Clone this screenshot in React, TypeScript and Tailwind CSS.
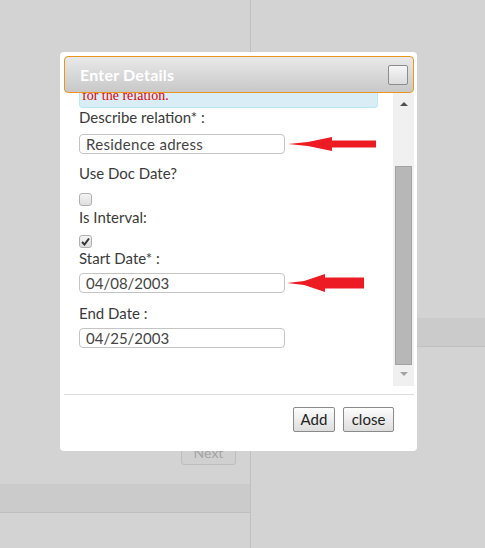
import React from "react";

const font = { fontFamily: "Lato, 'Open Sans', sans-serif" };

const Arrow = ({ w, h, head, shaft }: { w: number; h: number; head: number; shaft: number }) => {
  const m = h / 2;
  return (
    <svg width={w} height={h} viewBox={`0 0 ${w} ${h}`} className="shrink-0">
      <path
        d={`M0 ${m} L${head * 0.45} ${m - 2} L${head} 0 L${head} ${m - shaft / 2} L${w} ${m - shaft / 2} L${w} ${m + shaft / 2} L${head} ${m + shaft / 2} L${head} ${h} L${head * 0.45} ${m + 2} Z`}
        fill="#ed1c24"
      />
    </svg>
  );
};

const Field = ({ value, date }: { value: string; date?: boolean }) => (
  <div
    className={`w-[206px] h-[20px] border border-[#c4c4c4] rounded-[4px] bg-white pl-[6px] text-[15px] leading-[18px] text-[#444] ${
      date ? "tracking-[0px]" : "tracking-[0.3px]"
    }`}
  >
    {value}
  </div>
);

const Check = ({ checked }: { checked?: boolean }) => (
  <div className="w-[13px] h-[13px] border border-[#b0b0b0] rounded-[3px] bg-gradient-to-b from-[#f4f4f4] to-[#dedede] flex items-center justify-center">
    {checked ? (
      <svg width="9" height="9" viewBox="0 0 9 9">
        <path d="M1 5 L3.5 7.5 L8 1.5" stroke="#333" strokeWidth="2" fill="none" />
      </svg>
    ) : null}
  </div>
);

const Label = ({ children, className = "" }: { children: React.ReactNode; className?: string }) => (
  <div className={`h-[18px] leading-[18px] text-[15px] text-[#3a3a3a] ${className}`}>{children}</div>
);

export default function App() {
  return (
    <div className="relative w-[485px] h-[548px] overflow-hidden bg-[#d3d3d3] flex" style={font}>
      {/* page behind overlay */}
      <div className="w-[251px] h-full border-r border-[#c0c0c0] flex flex-col">
        <div className="h-[440px]" />
        <div className="flex justify-end pr-[14px]">
          <div className="w-[55px] h-[25px] border border-[#bdbdbd] rounded-[3px] bg-[#d0d0d0] text-[14px] leading-[23px] text-center text-[#a5a5a5]">
            Next
          </div>
        </div>
        <div className="mt-[19px] h-[29px] bg-[#cbcbcb] border-b border-[#bfbfbf]" />
      </div>
      <div className="flex-1 flex flex-col">
        <div className="h-[318px]" />
        <div className="h-[29px] bg-[#cbcbcb] border-b border-[#c0c0c0]" />
      </div>

      {/* dialog */}
      <div className="absolute left-[60px] top-[52px] w-[357px] h-[399px] bg-white rounded-[4px] pt-[4px] pl-[4px] flex flex-col">
        <div className="w-[350px] h-[37px] shrink-0 border border-[#e8961f] rounded-[4px] bg-gradient-to-b from-[#e9e9e9] to-[#c8c8c8] flex items-center justify-between pl-[15px] pr-[5px]">
          <span className="text-white font-bold text-[16px] tracking-[0.2px]">Enter Details</span>
          <div className="w-[20px] h-[20px] border border-[#8c8c8c] rounded-[2px] bg-gradient-to-b from-[#f6f6f6] to-[#dcdcdc]" />
        </div>

        <div className="w-[350px] h-[293px] flex">
          <div className="flex-1 pl-[15px] flex flex-col overflow-hidden">
            <div className="w-[299px] h-[15px] bg-[#d9edf7] border border-t-0 border-[#bce8f1] rounded-b-[4px] overflow-hidden flex items-end pl-[2px]">
              <span className="text-[14px] leading-[16px] text-[#e00000] relative top-[-3px]" style={{ fontFamily: "'Liberation Serif', serif" }}>
                for the relation.
              </span>
            </div>
            <Label>Describe relation* :</Label>
            <div className="mt-[8px] flex items-center gap-[3px]">
              <Field value="Residence adress" />
              <Arrow w={88} h={14} head={44} shaft={7} />
            </div>
            <Label className="mt-[10px]">Use Doc Date?</Label>
            <div className="mt-[11px]">
              <Check />
            </div>
            <Label className="mt-[2px]">Is Interval:</Label>
            <div className="mt-[9px]">
              <Check checked />
            </div>
            <Label className="mt-[1px]">Start Date* :</Label>
            <div className="mt-[6px] flex items-center gap-[2px]">
              <Field value="04/08/2003" date />
              <Arrow w={77} h={18} head={38} shaft={11} />
            </div>
            <Label className="mt-[11px]">End Date :</Label>
            <div className="mt-[6px]">
              <Field value="04/25/2003" date />
            </div>
          </div>
          {/* scrollbar */}
          <div className="w-[21px] h-full bg-[#f0f0f0] flex flex-col items-center">
            <div className="mt-[9px] w-0 h-0 border-l-[4px] border-r-[4px] border-b-[4px] border-l-transparent border-r-transparent border-b-[#505050]" />
            <div className="mt-[60px] w-[17px] h-[199px] bg-[#b7b7b7] border border-[#a3a3a3]" />
            <div className="mt-[7px] w-0 h-0 border-l-[4px] border-r-[4px] border-t-[4px] border-l-transparent border-r-transparent border-t-[#a3a3a3]" />
          </div>
        </div>

        <div className="mt-[8px] w-[350px] border-t border-[#dcdcdc]" />
        <div className="w-[350px] flex justify-end gap-[8px] pr-[20px] mt-[12px]">
          <button className="w-[42px] h-[25px] border border-[#8a8a8a] rounded-[2px] bg-gradient-to-b from-[#fdfdfd] to-[#dddddd] text-[15px] leading-[23px] text-[#222]">
            Add
          </button>
          <button className="w-[51px] h-[25px] border border-[#8a8a8a] rounded-[2px] bg-gradient-to-b from-[#fdfdfd] to-[#dddddd] text-[15px] leading-[23px] text-[#222]">
            close
          </button>
        </div>
      </div>
    </div>
  );
}
